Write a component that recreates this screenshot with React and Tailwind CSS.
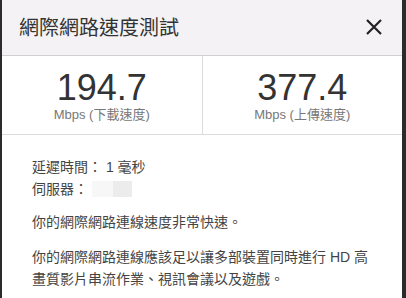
export default function App() {
    return (
        <div className="flex h-[298px] w-[406px] bg-[#2b2b2b] pl-[2px] pr-[4px]" style={{ fontFamily: '"Liberation Sans", "Noto Sans CJK TC", sans-serif' }}>
            <div className="flex h-full flex-1 flex-col bg-white text-[#333]">
                <div className="flex h-[56px] items-center justify-between border-b border-[#cfcfcf] bg-[#f4f2f5] pl-[17px] pr-[20px]">
                    <h2 className="text-[20px] text-[#333]">網際網路速度測試</h2>
                    <svg width="16" height="16" viewBox="0 0 16 16" className="mt-[-2px]">
                        <path d="M1 1 L15 15 M15 1 L1 15" stroke="#222" strokeWidth="2.2" fill="none" />
                    </svg>
                </div>
                <div className="flex h-[79px] border-b border-[#dcdcdc]">
                    <div className="flex flex-1 flex-col items-center justify-center border-r border-[#dcdcdc] pt-[2px]">
                        <div className="text-[36px] leading-[36px] text-[#333]">194.7</div>
                        <div className="mt-[1px] text-[13px] leading-[15px] text-[#777]">Mbps (下載速度)</div>
                    </div>
                    <div className="flex flex-1 flex-col items-center justify-center pt-[2px]">
                        <div className="text-[36px] leading-[36px] text-[#333]">377.4</div>
                        <div className="mt-[1px] text-[13px] leading-[15px] text-[#777]">Mbps (上傳速度)</div>
                    </div>
                </div>
                <div className="px-[30px] pt-[21px] text-[14px] leading-[22px] text-[#444]">
                    <div>延遲時間： 1 毫秒</div>
                    <div className="flex items-center">
                        <span>伺服器：</span>
                        <span className="ml-[4px] inline-block h-[16px] w-[21px] bg-[#f7f7f7]"></span>
                        <span className="inline-block h-[16px] w-[19px] bg-[#ececec]"></span>
                    </div>
                    <p className="mt-[11px]">你的網際網路連線速度非常快速。</p>
                    <p className="mt-[13px]">你的網際網路連線應該足以讓多部裝置同時進行 HD 高畫質影片串流作業、視訊會議以及遊戲。</p>
                </div>
            </div>
        </div>
    );
}
